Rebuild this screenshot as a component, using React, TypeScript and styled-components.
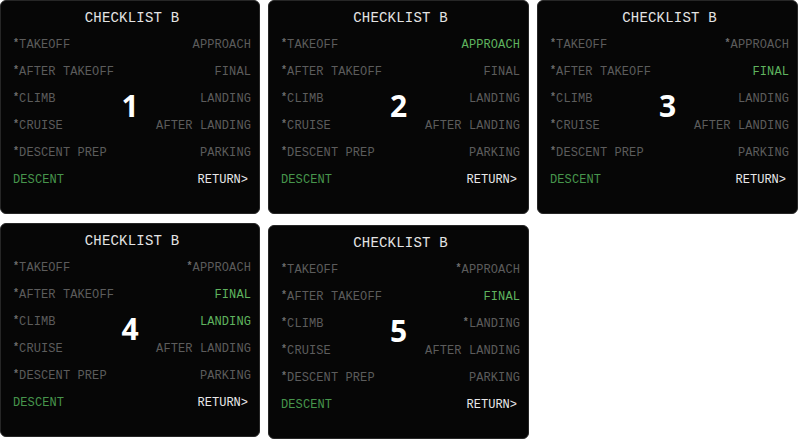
import React from 'react';
import styled, { createGlobalStyle } from 'styled-components';

type ItemState = 'done' | 'pending' | 'active' | 'phase';

interface Item {
  label: string;
  state: ItemState;
}

interface Step {
  n: number;
  right: Item[];
  shift?: number;
}

const GlobalStyle = createGlobalStyle`
  html, body {
    margin: 0;
    padding: 0;
    background: #ffffff;
  }
  body {
    font-family: "Liberation Mono", "DejaVu Sans Mono", monospace;
  }
`;

const stateColor: Record<ItemState, string> = {
  done: '#5c5c5c',
  pending: '#5c5c5c',
  active: '#5fb35f',
  phase: '#46954c',
};

const Sheet = styled.div`
  display: grid;
  grid-template-columns: 260px 261px 261px;
  column-gap: 8px;
  row-gap: 9px;
  width: 800px;
`;

const Panel = styled.section<{ $shift: number }>`
  position: relative;
  box-sizing: border-box;
  height: 214px;
  margin-top: ${p => p.$shift}px;
  padding: 9px 8px 0 12px;
  background: #060606;
  border: 1px solid #262626;
  border-radius: 6px;
  display: flex;
  flex-direction: column;
`;

const Title = styled.h1`
  margin: 0 0 5px;
  font-size: 14px;
  font-weight: 400;
  line-height: 16px;
  text-align: center;
  color: #e4e4e4;
  letter-spacing: 0.2px;
`;

const Rows = styled.div`
  display: grid;
  grid-template-columns: 1fr 1fr;
  grid-auto-rows: 27px;
  align-items: center;
`;

const Cell = styled.div<{ $state: ItemState; $align: 'left' | 'right' }>`
  font-size: 12px;
  line-height: 14px;
  white-space: nowrap;
  letter-spacing: 0.1px;
  text-align: ${p => p.$align};
  color: ${p => stateColor[p.$state]};
`;

const Return = styled.div`
  font-size: 12px;
  line-height: 14px;
  text-align: right;
  color: #e8e8e8;
  padding-right: 3px;
`;

const Mark = styled.span`
  font-size: 10px;
  vertical-align: 2px;
  color: #6e6e6e;
  font-weight: 700;
`;

const StepNumber = styled.div`
  position: absolute;
  left: 0;
  right: 0;
  top: 87px;
  text-align: center;
  font-family: "Open Sans", "Liberation Sans", sans-serif;
  font-weight: 700;
  font-size: 30px;
  line-height: 36px;
  color: #ffffff;
  pointer-events: none;
`;

const leftItems: Item[] = [
  { label: 'TAKEOFF', state: 'done' },
  { label: 'AFTER TAKEOFF', state: 'done' },
  { label: 'CLIMB', state: 'done' },
  { label: 'CRUISE', state: 'done' },
  { label: 'DESCENT PREP', state: 'done' },
];

const rightLabels = ['APPROACH', 'FINAL', 'LANDING', 'AFTER LANDING', 'PARKING'];

const rightOf = (states: ItemState[]): Item[] =>
  rightLabels.map((label, i) => ({ label, state: states[i] ?? 'pending' }));

const steps: Step[] = [
  { n: 1, right: rightOf([]) },
  { n: 2, right: rightOf(['active']) },
  { n: 3, right: rightOf(['done', 'active']) },
  { n: 4, right: rightOf(['done', 'active', 'active']) },
  { n: 5, right: rightOf(['done', 'active', 'done']), shift: 2 },
];

const ItemText: React.FC<{ item: Item; align: 'left' | 'right' }> = ({ item, align }) => (
  <Cell $state={item.state} $align={align}>
    {item.state === 'done' && <Mark>*</Mark>}
    {item.label}
  </Cell>
);

const ChecklistPanel: React.FC<{ step: Step }> = ({ step }) => (
  <Panel $shift={step.shift ?? 0}>
    <Title>CHECKLIST B</Title>
    <Rows>
      {leftItems.map((item, i) => (
        <React.Fragment key={item.label}>
          <ItemText item={item} align="left" />
          <ItemText item={step.right[i]} align="right" />
        </React.Fragment>
      ))}
      <Cell $state="phase" $align="left">DESCENT</Cell>
      <Return>RETURN&gt;</Return>
    </Rows>
    <StepNumber>{step.n}</StepNumber>
  </Panel>
);

export default function App() {
  return (
    <>
      <GlobalStyle />
      <Sheet>
        {steps.map(s => (
          <ChecklistPanel key={s.n} step={s} />
        ))}
      </Sheet>
    </>
  );
}
